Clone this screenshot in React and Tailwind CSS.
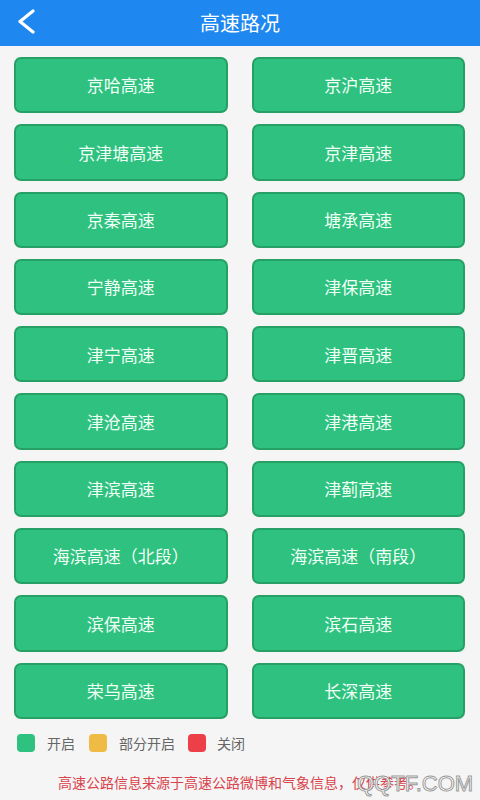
import React from "react";

const roads = [
  "京哈高速", "京沪高速",
  "京津塘高速", "京津高速",
  "京秦高速", "塘承高速",
  "宁静高速", "津保高速",
  "津宁高速", "津晋高速",
  "津沧高速", "津港高速",
  "津滨高速", "津蓟高速",
  "海滨高速（北段）", "海滨高速（南段）",
  "滨保高速", "滨石高速",
  "荣乌高速", "长深高速",
];

export default function App() {
  return (
    <div className="w-[480px] h-[800px] bg-[#f5f5f5] flex flex-col overflow-hidden relative" style={{ fontFamily: '"Noto Sans CJK SC", "Noto Sans", sans-serif' }}>
      <div className="h-[46px] bg-[#1e88f0] flex items-center relative shrink-0">
        <svg className="absolute left-[16px] top-[9px]" width="20" height="25" viewBox="0 0 20 25">
          <path d="M17 2 L4 12.5 L17 23" fill="none" stroke="white" strokeWidth="3.2" strokeLinecap="round" strokeLinejoin="round" />
        </svg>
        <div className="flex-1 text-center text-white text-[20px] leading-none">高速路况</div>
      </div>
      <div className="grid grid-cols-2 gap-x-[24px] gap-y-[11px] pt-[11px] pl-[14px] pr-[15px]">
        {roads.map((r) => (
          <div key={r} className="h-[56.3px] bg-[#2fc17f] border-2 border-[#27a065] rounded-[7px] flex items-center justify-center text-[#f0fff6] text-[17px]">
            {r}
          </div>
        ))}
      </div>
      <div className="flex items-center pl-[17px] pt-[14px] text-[14px] text-[#666666]">
        <div className="w-[18px] h-[18px] rounded-[4px] bg-[#2fc17f]"></div>
        <span className="ml-[12px]">开启</span>
        <div className="ml-[14px] w-[18px] h-[18px] rounded-[4px] bg-[#f0bb45]"></div>
        <span className="ml-[12px]">部分开启</span>
        <div className="ml-[13px] w-[18px] h-[18px] rounded-[4px] bg-[#ec3f48]"></div>
        <span className="ml-[11px]">关闭</span>
      </div>
      <div className="pt-[18px] text-center text-[14px] text-[#d9434c]">高速公路信息来源于高速公路微博和气象信息，仅供参考。</div>
      <div className="absolute left-[357px] top-[773px] leading-none text-[22px] text-white [-webkit-text-stroke:1px_#9a9a9a]" style={{ fontFamily: '"Liberation Sans", sans-serif' }}>QQTF.COM</div>
    </div>
  );
}
